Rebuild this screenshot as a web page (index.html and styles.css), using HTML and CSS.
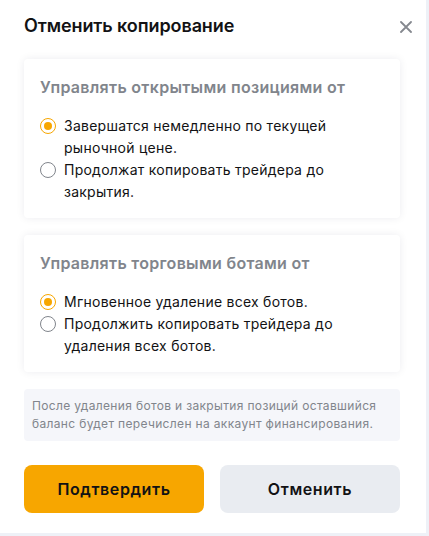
FILE: index.html
```html
<!DOCTYPE html>
<html lang="ru">
<head>
<meta charset="utf-8">
<link rel="stylesheet" href="styles.css">
</head>
<body>
<div class="dialog">
  <div class="header">
    <h1 class="title">Отменить копирование</h1>
    <button class="close" aria-label="Закрыть">
      <svg width="12" height="12" viewBox="0 0 12 12"><path d="M1 1L11 11M11 1L1 11" stroke="#85888f" stroke-width="1.8" stroke-linecap="round"/></svg>
    </button>
  </div>
  <div class="card">
    <div class="card-title">Управлять открытыми позициями от</div>
    <label class="option"><span class="radio checked"></span><span class="opt-text">Завершатся немедленно по текущей рыночной цене.</span></label>
    <label class="option"><span class="radio"></span><span class="opt-text">Продолжат копировать трейдера до закрытия.</span></label>
  </div>
  <div class="card">
    <div class="card-title">Управлять торговыми ботами от</div>
    <label class="option"><span class="radio checked"></span><span class="opt-text">Мгновенное удаление всех ботов.</span></label>
    <label class="option"><span class="radio"></span><span class="opt-text">Продолжить копировать трейдера до удаления всех ботов.</span></label>
  </div>
  <div class="note">После удаления ботов и закрытия позиций оставшийся баланс будет перечислен на аккаунт финансирования.</div>
  <div class="actions">
    <button class="btn btn-primary">Подтвердить</button>
    <button class="btn btn-secondary">Отменить</button>
  </div>
</div>
</body>
</html>
```
FILE: styles.css
```css
* { box-sizing: border-box; }
html, body { margin: 0; padding: 0; }
body {
  background: #eef1f7;
  font-family: Inter, "Noto Sans", sans-serif;
  width: 429px;
  height: 536px;
  overflow: hidden;
}
.dialog {
  width: 426px;
  height: 533px;
  background: #ffffff;
  padding: 12px 26px 0 24px;
  display: flex;
  flex-direction: column;
}
.header {
  display: flex;
  align-items: center;
  justify-content: space-between;
  height: 28px;
  margin-bottom: 19px;
}
.title {
  margin: 0;
  font-size: 18px;
  font-weight: 600;
  line-height: 28px;
  letter-spacing: -0.1px;
  color: #121214;
}
.close {
  border: 0;
  background: none;
  padding: 0;
  width: 12px;
  height: 12px;
  margin-right: -12px;
  margin-top: 1px;
  display: flex;
}
.card {
  background: #fff;
  border-radius: 4px;
  box-shadow: 0 0 8px rgba(20, 30, 60, 0.08);
  padding: 16px 16px 15px 16px;
  margin-bottom: 17px;
}
.card-title {
  font-size: 16px;
  font-weight: 600;
  line-height: 24px;
  letter-spacing: 0.3px;
  color: #81858c;
  margin-bottom: 16px;
}
.option {
  display: flex;
  align-items: flex-start;
  gap: 8px;
  font-size: 14px;
  line-height: 22px;
  letter-spacing: 0.25px;
  color: #121214;
}
.radio {
  flex: none;
  width: 16px;
  height: 16px;
  margin-top: 3px;
  border-radius: 50%;
  border: 1px solid #81858c;
  display: flex;
  align-items: center;
  justify-content: center;
}
.radio.checked {
  border-color: #f7a600;
}
.radio.checked::after {
  content: "";
  width: 8px;
  height: 8px;
  border-radius: 50%;
  background: #f7a600;
}
.note {
  background: #f5f6fa;
  border-radius: 4px;
  padding: 8px;
  font-size: 12px;
  line-height: 18px;
  letter-spacing: 0.34px;
  color: #81858c;
  margin-bottom: 24px;
}
.actions {
  display: flex;
  gap: 16px;
}
.btn {
  flex: 1;
  height: 48px;
  border: 0;
  border-radius: 8px;
  font-family: inherit;
  font-size: 16px;
  font-weight: 600;
  letter-spacing: 0.6px;
  color: #121214;
}
.btn-primary { background: #f7a600; }
.btn-secondary { background: #e9ecf1; }
```
